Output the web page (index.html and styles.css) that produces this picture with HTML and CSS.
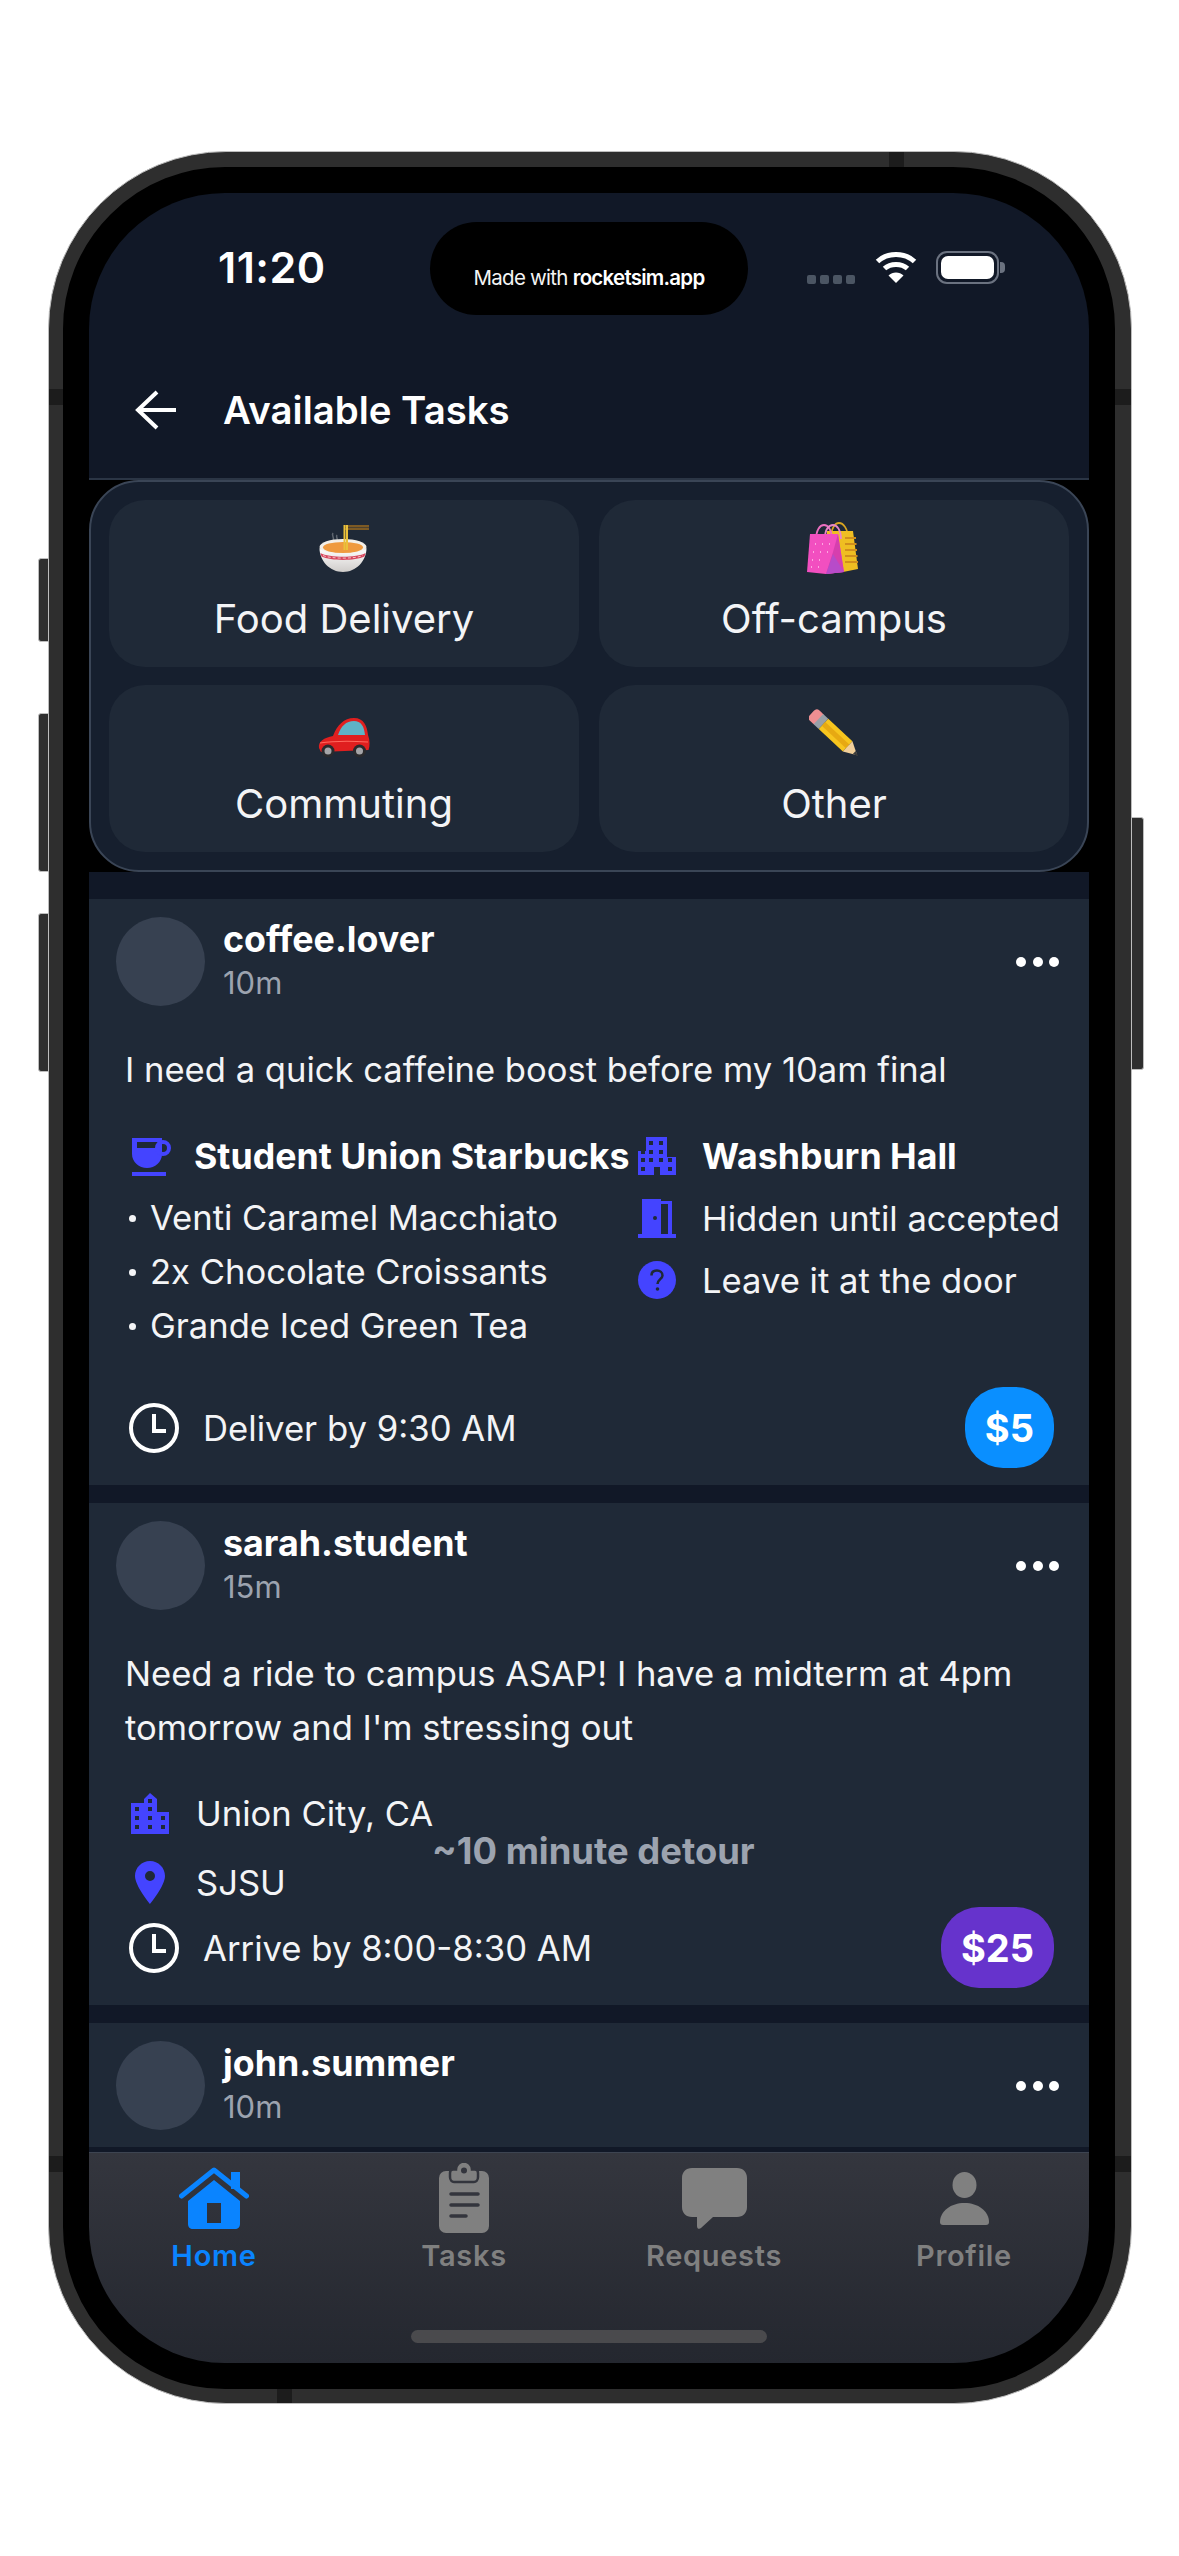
FILE: index.html
```html
<!DOCTYPE html>
<html lang="en">
<head>
  <meta charset="UTF-8" />
  <meta name="viewport" content="width=device-width, initial-scale=1.0"/>
  <title>Available Tasks</title>
  <link rel="stylesheet" href="styles.css">
</head>
<body>

  <div class="phone">
    <span class="side-btn btn-mute"></span>
    <span class="side-btn btn-up"></span>
    <span class="side-btn btn-down"></span>
    <span class="side-btn btn-power"></span>
    <span class="band band-l1"></span>
    <span class="band band-l2"></span>
    <span class="band band-r1"></span>
    <span class="band band-r2"></span>
    <span class="band band-t"></span>
    <span class="band band-b"></span>

    <div class="bezel">
      <div class="screen">
        <div class="island">Made with&nbsp;<b>rocketsim.app</b></div>

        <div class="status">
          <span class="time">11:20</span>
          <div class="status-right">
            <div class="signal"><i></i><i></i><i></i><i></i></div>
            <svg class="wifi" width="42" height="32" viewBox="0 0 42 32">
              <path d="M2.5 10.5C12.5 1 29.5 1 39.5 10.5" fill="none" stroke="#fff" stroke-width="5"/>
              <path d="M9.5 17.5C15.5 12 26.5 12 32.5 17.5" fill="none" stroke="#fff" stroke-width="5"/>
              <path d="M21 32L13.5 24.5C17.5 20.5 24.5 20.5 28.5 24.5Z" fill="#fff"/>
            </svg>
            <div class="battery"><span></span></div>
          </div>
        </div>

        <header class="topbar">
          <svg class="back" width="42" height="40" viewBox="0 0 42 40">
            <path d="M22 2L3 20L22 38M3 20H41" fill="none" stroke="#fff" stroke-width="4"/>
          </svg>
          <h1>Available Tasks</h1>
        </header>

        <section class="categories">
          <div class="tile">
            <div class="emoji">
              <svg width="50" height="48" viewBox="0 0 50 48">
                <defs>
                  <linearGradient id="bowl" x1="0" y1="0" x2="0" y2="1">
                    <stop offset="0" stop-color="#fff"/>
                    <stop offset="1" stop-color="#cfccca"/>
                  </linearGradient>
                </defs>
                <path d="M14 9c-2 3 2 4 0 8M18 11c-1.500 2 1 3 0 5" fill="none" stroke="#8a8f96" stroke-width="1.500" opacity=".6"/>
                <ellipse cx="24" cy="23" rx="23.500" ry="8" fill="#f3efe8"/>
                <ellipse cx="24" cy="23.500" rx="20" ry="5.500" fill="#ef9a3f"/>
                <path d="M25 1h25v2.200H25zM25 3.800h25V6H25z" fill="#7d5a24"/>
                <path d="M25.500 1V26M28 1V26" stroke="#eac13a" stroke-width="2"/>
                <path d="M.5 24C6 31 42 31 47.500 24C47.500 37 37 48 24 48S.5 37 .5 24Z" fill="url(#bowl)"/>
                <path d="M1.500 29C10 34 38 34 46.500 29L45.500 32.500C36 37 12 37 2.500 32.500Z" fill="#d8445c"/>
                <path d="M4 31.500C12 35 36 35 44 31.500" fill="none" stroke="#f5c6c8" stroke-width="1" stroke-dasharray="3 2"/>
              </svg>
            </div>
            <span class="tile-label">Food Delivery</span>
          </div>
          <div class="tile">
            <div class="emoji emoji-bags">
              <svg width="51" height="52" viewBox="0 0 51 52">
                <path d="M24 17C24 6 28 1 32 1S41 6 41 17" fill="none" stroke="#d9a520" stroke-width="1.800"/>
                <path d="M20 9H46L51 47L36 50H20Z" fill="#efbe22"/>
                <path d="M38 16H49M38 22H49.500M38 28H50M38 34H50.500M38 40H51" stroke="#d18f1c" stroke-width="2"/>
                <path d="M9 18C9 8 13 3 17 3S25 8 25 18" fill="none" stroke="#ec6fc0" stroke-width="1.800"/>
                <path d="M18 16C18 7 22 3 26 3S34 8 34 17" fill="none" stroke="#e786c8" stroke-width="1.800"/>
                <path d="M3 12H31L37 50L19 52L0 50Z" fill="#f24fc0"/>
                <path d="M31 12L37 50L19 52L26 30Z" fill="#d63fae"/>
                <path d="M26 32L37 50L19 52Z" fill="#b74bc9"/>
                <path d="M8 22h1M15 22h1M22 22h1M6 30h1M13 30h1M20 30h1M5 38h1M12 38h1M4 45h1M11 45h1" stroke="#ffc4ea" stroke-width="1.500"/>
              </svg>
            </div>
            <span class="tile-label">Off-campus</span>
          </div>
          <div class="tile">
            <div class="emoji emoji-car">
              <svg width="52" height="40" viewBox="0 0 52 40">
                <path d="M1 30C0 23 6 20 15 18C19 7 26 0 36 0C46 0 49 8 50 17C52 22 52 28 50.500 32L3 34Z" fill="#e01f1f"/>
                <path d="M20 17C23 8 28 3 36 3C43 3 46 8 47 17Z" fill="#5fb3c6"/>
                <path d="M2 25C15 23 35 23 50 24" fill="none" stroke="#ff6a5e" stroke-width="1.200"/>
                <circle cx="10" cy="33" r="6.500" fill="#2a2a2d"/>
                <circle cx="10" cy="33" r="3.500" fill="#a5a5a8"/>
                <circle cx="41.500" cy="33" r="6.500" fill="#2a2a2d"/>
                <circle cx="41.500" cy="33" r="3.500" fill="#a5a5a8"/>
              </svg>
            </div>
            <span class="tile-label">Commuting</span>
          </div>
          <div class="tile">
            <div class="emoji">
              <svg width="51" height="50" viewBox="0 0 51 50">
                <g transform="translate(5 7) rotate(43)">
                  <rect x="-3" y="-7" width="12" height="14" rx="4" fill="#ee8f92"/>
                  <rect x="6" y="-7" width="7" height="14" fill="#98a0a8"/>
                  <rect x="13" y="-7" width="33" height="14" fill="#f7c51e"/>
                  <rect x="13" y="-2.500" width="33" height="5" fill="#e7a912"/>
                  <path d="M46 -7L59 0L46 7Z" fill="#f2cf9a"/>
                  <path d="M55 -2L60.500 0L55 2Z" fill="#3a3a3a"/>
                </g>
              </svg>
            </div>
            <span class="tile-label">Other</span>
          </div>
        </section>

        <main class="feed">

          <article class="card">
            <div class="card-head">
              <div class="avatar"></div>
              <div class="who">
                <span class="name">coffee.lover</span>
                <span class="ago">10m</span>
              </div>
              <div class="more"><i></i><i></i><i></i></div>
            </div>
            <p class="note">I need a quick caffeine boost before my 10am final</p>
            <div class="details">
              <div class="col-left">
                <div class="row strong">
                  <svg class="ico" width="40" height="39" viewBox="0 0 40 39">
                    <path d="M1 1H31V17C31 25 24 31 16 31S1 25 1 17Z" fill="#4444ff"/>
                    <rect x="6" y="5" width="21" height="6" fill="#1f2937"/>
                    <circle cx="32" cy="11" r="6" fill="none" stroke="#4444ff" stroke-width="4"/>
                    <rect x="1" y="35" width="34" height="4" fill="#4444ff"/>
                  </svg>
                  <span>Student Union Starbucks</span>
                </div>
                <ul class="items">
                  <li>Venti Caramel Macchiato</li>
                  <li>2x Chocolate Croissants</li>
                  <li>Grande Iced Green Tea</li>
                </ul>
              </div>
              <div class="col-right">
                <div class="row strong">
                  <svg class="ico" width="38" height="38" viewBox="0 0 38 38">
                    <path d="M8 0H29V20H38V38H22V30H16V38H0V14H8Z" fill="#4444ff"/>
                    <path d="M11 4h4v4h-4zM21 4h4v4h-4zM3 13h4v4H3zM11 13h4v4h-4zM21 13h4v4h-4zM3 21h4v4H3zM11 21h4v4h-4zM21 21h4v4h-4zM30 21h4v4h-4zM3 30h4v4H3zM30 30h4v4h-4z" fill="#1f2937"/>
                  </svg>
                  <span>Washburn Hall</span>
                </div>
                <div class="row">
                  <svg class="ico" width="38" height="39" viewBox="0 0 38 39">
                    <path d="M4 0H23V2H34V35H38V39H0V35H4ZM23 5V35H30V5Z" fill="#4444ff"/>
                    <circle cx="17" cy="19" r="2" fill="#1f2937"/>
                  </svg>
                  <span>Hidden until accepted</span>
                </div>
                <div class="row">
                  <svg class="ico" width="38" height="38" viewBox="0 0 38 38">
                    <circle cx="19" cy="19" r="19" fill="#4444ff"/>
                    <path d="M13.500 14.500C13.500 11 16 9.500 19 9.500S24.500 11.500 24.500 14.500C24.500 18 19.500 18.500 19.500 23" fill="none" stroke="#1f2937" stroke-width="2.500"/>
                    <circle cx="19.500" cy="28" r="1.800" fill="#1f2937"/>
                  </svg>
                  <span>Leave it at the door</span>
                </div>
              </div>
            </div>
            <div class="foot">
              <svg class="clock" width="50" height="50" viewBox="0 0 50 50">
                <circle cx="25" cy="25" r="23" fill="none" stroke="#fff" stroke-width="4"/>
                <path d="M25 11V28H37" fill="none" stroke="#fff" stroke-width="4"/>
              </svg>
              <span class="when">Deliver by 9:30 AM</span>
              <span class="price price-blue">$5</span>
            </div>
          </article>

          <article class="card">
            <div class="card-head">
              <div class="avatar"></div>
              <div class="who">
                <span class="name">sarah.student</span>
                <span class="ago">15m</span>
              </div>
              <div class="more"><i></i><i></i><i></i></div>
            </div>
            <p class="note">Need a ride to campus ASAP! I have a midterm at 4pm tomorrow and I'm stressing out</p>
            <div class="route">
              <div class="stops">
                <div class="row">
                  <svg class="ico" width="38" height="41" viewBox="0 0 38 41">
                    <path d="M19 0L26 6V19H38V41H0V10H13V6Z" fill="#4444ff"/>
                    <path d="M17 6h4v4h-4zM4 14h4v4H4zM17 14h4v4h-4zM4 23h4v4H4zM17 23h4v4h-4zM30 23h4v4h-4zM4 32h4v4H4zM17 32h4v4h-4zM30 32h4v4h-4z" fill="#1f2937"/>
                  </svg>
                  <span>Union City, CA</span>
                </div>
                <div class="row">
                  <svg class="ico" width="38" height="43" viewBox="0 0 38 43">
                    <path fill-rule="evenodd" d="M19 0C10.700 0 4 6.700 4 15C4 25 19 43 19 43S34 25 34 15C34 6.700 27.300 0 19 0ZM19 10A5 5 0 1 1 19 20A5 5 0 1 1 19 10Z" fill="#4444ff"/>
                  </svg>
                  <span>SJSU</span>
                </div>
              </div>
              <span class="detour">~10 minute detour</span>
            </div>
            <div class="foot">
              <svg class="clock" width="50" height="50" viewBox="0 0 50 50">
                <circle cx="25" cy="25" r="23" fill="none" stroke="#fff" stroke-width="4"/>
                <path d="M25 11V28H37" fill="none" stroke="#fff" stroke-width="4"/>
              </svg>
              <span class="when">Arrive by 8:00-8:30 AM</span>
              <span class="price price-purple">$25</span>
            </div>
          </article>

          <article class="card">
            <div class="card-head">
              <div class="avatar"></div>
              <div class="who">
                <span class="name">john.summer</span>
                <span class="ago">10m</span>
              </div>
              <div class="more"><i></i><i></i><i></i></div>
            </div>
          </article>

        </main>

        <nav class="tabs">
          <div class="tab-row">
            <div class="tab active">
              <div class="tab-icon">
                <svg width="70" height="62" viewBox="0 0 70 62">
                  <path d="M52 5H61V22H52Z" fill="#0a84ff"/>
                  <path d="M2.500 29L35 3L67.500 29" fill="none" stroke="#0a84ff" stroke-width="5" stroke-linecap="round" stroke-linejoin="round"/>
                  <path fill-rule="evenodd" d="M35 13L61 34V57C61 60 59 62 56 62H14C11 62 9 60 9 57V34ZM28 36V56H42V36Z" fill="#0a84ff"/>
                </svg>
              </div>
              <span>Home</span>
            </div>
            <div class="tab">
              <div class="tab-icon">
                <svg width="50" height="70" viewBox="0 0 50 70">
                  <rect x="0" y="8" width="50" height="62" rx="7" fill="#808080"/>
                  <path d="M17 6.500A8 8 0 0 1 33 6.500H36C38 6.500 39 8 39 10V14C39 17 37 19 35 19H15C13 19 11 17 11 14V10C11 8 12 6.500 14 6.500Z" fill="#808080" stroke="#33353d" stroke-width="2.500"/>
                  <circle cx="25" cy="7.500" r="3" fill="#33353d"/>
                  <path d="M12 31H39M12 42H39M12 53H27" stroke="#33353d" stroke-width="3.500" stroke-linecap="round"/>
                </svg>
              </div>
              <span>Tasks</span>
            </div>
            <div class="tab">
              <div class="tab-icon">
                <svg width="65" height="61" viewBox="0 0 65 61">
                  <path d="M10 0H55C61 0 65 4 65 10V39C65 45 61 49 55 49H31L19 60C17.500 61.500 15 61 15 58V49H10C4 49 0 45 0 39V10C0 4 4 0 10 0Z" fill="#808080"/>
                </svg>
              </div>
              <span>Requests</span>
            </div>
            <div class="tab">
              <div class="tab-icon">
                <svg width="49" height="53" viewBox="0 0 49 53">
                  <ellipse cx="24.500" cy="13" rx="12" ry="13" fill="#808080"/>
                  <path d="M3 53C1 53 0 52 0 50C0 39 11 31 24.500 31S49 39 49 50C49 52 48 53 46 53Z" fill="#808080"/>
                </svg>
              </div>
              <span>Profile</span>
            </div>
          </div>
          <div class="home-bar"></div>
        </nav>
      </div>
    </div>
  </div>

</body>
</html>
```

FILE: styles.css
```css
* {
  margin: 0;
  padding: 0;
  box-sizing: border-box;
}

html, body {
  width: 1179px;
  height: 2556px;
  overflow: hidden;
  background: #fff;
  font-family: Inter, 'Liberation Sans', sans-serif;
}

body {
  padding: 151px 47px 0 48px;
}

.phone {
  position: relative;
  height: 2253px;
  border-radius: 178px;
  background: #2e2e2e;
  border: 1px solid #bdbdbd;
}

.bezel {
  height: 100%;
  padding: 15px 16px 14px 14px;
}

.screen {
  position: relative;
  height: 100%;
  border: 26px solid #000;
  border-radius: 162px;
  background: #000;
  overflow: hidden;
}

/* device bits */
.side-btn {
  position: absolute;
  width: 11px;
  background: #2e2e2e;
  border: 1px solid #bdbdbd;
  border-radius: 3px 0 0 3px;
}

.btn-mute { left: -11px; top: 406px; height: 84px; }
.btn-up { left: -11px; top: 561px; height: 159px; }
.btn-down { left: -11px; top: 761px; height: 159px; }

.btn-power {
  right: -13px;
  top: 665px;
  width: 13px;
  height: 253px;
  border-radius: 0 3px 3px 0;
}

.band {
  position: absolute;
  background: #1c1c1c;
}

.band-l1, .band-l2 { left: 0; width: 15px; height: 16px; }
.band-r1, .band-r2 { right: 0; width: 16px; height: 16px; }
.band-l1, .band-r1 { top: 237px; }
.band-l2, .band-r2 { top: 2004px; }
.band-t { top: 0; left: 840px; width: 15px; height: 16px; }
.band-b { bottom: 0; left: 228px; width: 15px; height: 15px; }

.island {
  position: absolute;
  z-index: 5;
  top: 29px;
  left: 341px;
  width: 318px;
  height: 93px;
  border-radius: 47px;
  background: #000;
  color: #f4f4f4;
  font-size: 20.5px;
  letter-spacing: -0.75px;
  display: flex;
  justify-content: center;
  align-items: center;
  padding-top: 17px;
}

.island b {
  font-weight: 600;
  color: #fff;
}

/* status bar and header */
.status {
  height: 150px;
  padding: 49px 90px 0 129px;
  background: #111827;
  display: flex;
  justify-content: space-between;
  align-items: flex-start;
}

.time {
  color: #fff;
  font-size: 43px;
  font-weight: 600;
  line-height: 50px;
  letter-spacing: 0.5px;
}

.status-right {
  display: flex;
  align-items: flex-start;
  padding-top: 9px;
}

.signal {
  display: flex;
  gap: 4px;
  margin: 24px 20px 0 0;
}

.signal i {
  width: 9px;
  height: 9px;
  border-radius: 2px;
  background: #4b5563;
}

.wifi {
  margin-right: 19px;
}

.battery {
  position: relative;
  width: 63px;
  height: 33px;
  border: 2px solid #6b7280;
  border-radius: 11px;
  padding: 3px;
}

.battery span {
  display: block;
  height: 100%;
  border-radius: 7px;
  background: #fff;
}

.battery::after {
  content: '';
  position: absolute;
  right: -8px;
  top: 9px;
  width: 5px;
  height: 11px;
  border-radius: 0 4px 4px 0;
  background: #6b7280;
}

.topbar {
  height: 137px;
  padding: 0 0 1px 46px;
  background: #111827;
  border-bottom: 2px solid #2b3545;
  display: flex;
  align-items: center;
  gap: 46px;
}

.topbar h1 {
  color: #fff;
  font-size: 38.4px;
  font-weight: 600;
}

/* category grid */
.categories {
  height: 392px;
  padding: 18px;
  background: #161f2e;
  border: 2px solid #3a4556;
  border-radius: 50px;
  display: grid;
  grid-template-columns: 1fr 1fr;
  gap: 18px 20px;
  position: relative;
}

.screen::before {
  content: '';
  position: absolute;
  inset: 0;
  background: #111827;
  z-index: -1;
}

.tile {
  background: #1f2937;
  border-radius: 36px;
  padding-top: 22px;
  display: flex;
  flex-direction: column;
  align-items: center;
}

.emoji {
  height: 52px;
  display: flex;
  align-items: center;
  justify-content: center;
}

.emoji svg {
  display: block;
}

.emoji-bags {
  padding-right: 3px;
}

.emoji-car {
  padding-top: 10px;
}

.tile-label {
  margin-top: 21px;
  color: #f3f4f6;
  font-size: 40px;
  line-height: 48px;
}

/* feed */
.feed {
  height: 1280px;
  padding-top: 27px;
  background: #111827;
  display: flex;
  flex-direction: column;
  gap: 18px;
  overflow: hidden;
}

.card {
  flex: none;
  background: #1f2937;
  padding: 18px 35px 17px 36px;
}

.card-head {
  margin-left: -9px;
  display: flex;
  align-items: flex-start;
  gap: 18px;
}

.avatar {
  flex: none;
  width: 89px;
  height: 89px;
  border-radius: 50%;
  background: #374151;
}

.who {
  display: flex;
  flex-direction: column;
}

.name {
  margin-top: 1px;
  color: #fff;
  font-size: 35.8px;
  font-weight: 700;
  line-height: 42px;
}

.ago {
  margin-top: 2px;
  color: #9ca3af;
  font-size: 31px;
  line-height: 42px;
}

.more {
  margin: 40px -5px 0 auto;
  display: flex;
  gap: 6.5px;
}

.more i {
  width: 10px;
  height: 10px;
  border-radius: 50%;
  background: #fff;
}

.note {
  margin-top: 36px;
  color: #f3f4f6;
  font-size: 34.6px;
  line-height: 54px;
}

.row {
  display: flex;
  align-items: center;
  color: #f3f4f6;
  font-size: 34.6px;
  line-height: 54px;
  white-space: nowrap;
}

.row .ico {
  flex: none;
}

.row.strong {
  color: #fff;
  font-size: 35.7px;
  font-weight: 700;
}

.details {
  margin: 33px 0 35px;
  display: flex;
}

.col-left {
  flex: none;
  width: 513px;
}

.col-left .row {
  margin-bottom: 7px;
  padding-left: 6px;
}

.col-left .ico {
  margin-right: 23px;
}

.col-right {
  display: flex;
  flex-direction: column;
  gap: 8px;
}

.col-right .ico {
  margin-right: 26px;
}

.items {
  list-style: none;
}

.items li {
  color: #f3f4f6;
  font-size: 34.6px;
  line-height: 54px;
  display: flex;
  align-items: center;
  white-space: nowrap;
}

.items li::before {
  content: '';
  width: 7px;
  height: 7px;
  margin: 3px 14px 0 4px;
  border-radius: 50%;
  background: #f3f4f6;
}

.route {
  margin: 32px 0 -2px;
  display: flex;
  align-items: center;
}

.stops {
  padding-left: 6px;
  display: flex;
  flex-direction: column;
  gap: 15px;
}

.stops .ico {
  margin-right: 27px;
}

.detour {
  color: #9ca3af;
  font-size: 36.4px;
  font-weight: 700;
  margin-top: 7px;
  margin-left: -1px;
}

.foot {
  display: flex;
  align-items: center;
}

.clock {
  flex: none;
  margin: 0 24px 0 4px;
}

.when {
  color: #f3f4f6;
  font-size: 34.7px;
}

.price {
  margin-left: auto;
  height: 81px;
  padding: 0 20px;
  border-radius: 38px;
  color: #fff;
  font-size: 38px;
  font-weight: 700;
  display: flex;
  align-items: center;
}

.price-blue { background: #0a8fff; }
.price-purple { background: #6633cc; }

/* tab bar */
.tabs {
  position: absolute;
  left: 0;
  right: 0;
  bottom: 0;
  border-top: 1px solid #3d4451;
  background: linear-gradient(#34363e, #24272f);
  display: flex;
  flex-direction: column;
  align-items: center;
}

.tab-row {
  align-self: stretch;
  padding-top: 10px;
  display: grid;
  grid-template-columns: repeat(4, 1fr);
}

.tab {
  display: flex;
  flex-direction: column;
  align-items: center;
  gap: 5px;
  color: #808080;
  font-size: 29px;
  font-weight: 600;
  line-height: 36px;
  letter-spacing: 0.7px;
}

.tab.active {
  color: #0a84ff;
}

.tab-icon {
  height: 70px;
  display: flex;
  align-items: center;
  justify-content: center;
}

.tab-icon svg {
  display: block;
}

.home-bar {
  width: 356px;
  height: 13px;
  margin: 56px 0 20px;
  border-radius: 7px;
  background: #4a4a4d;
}
```
